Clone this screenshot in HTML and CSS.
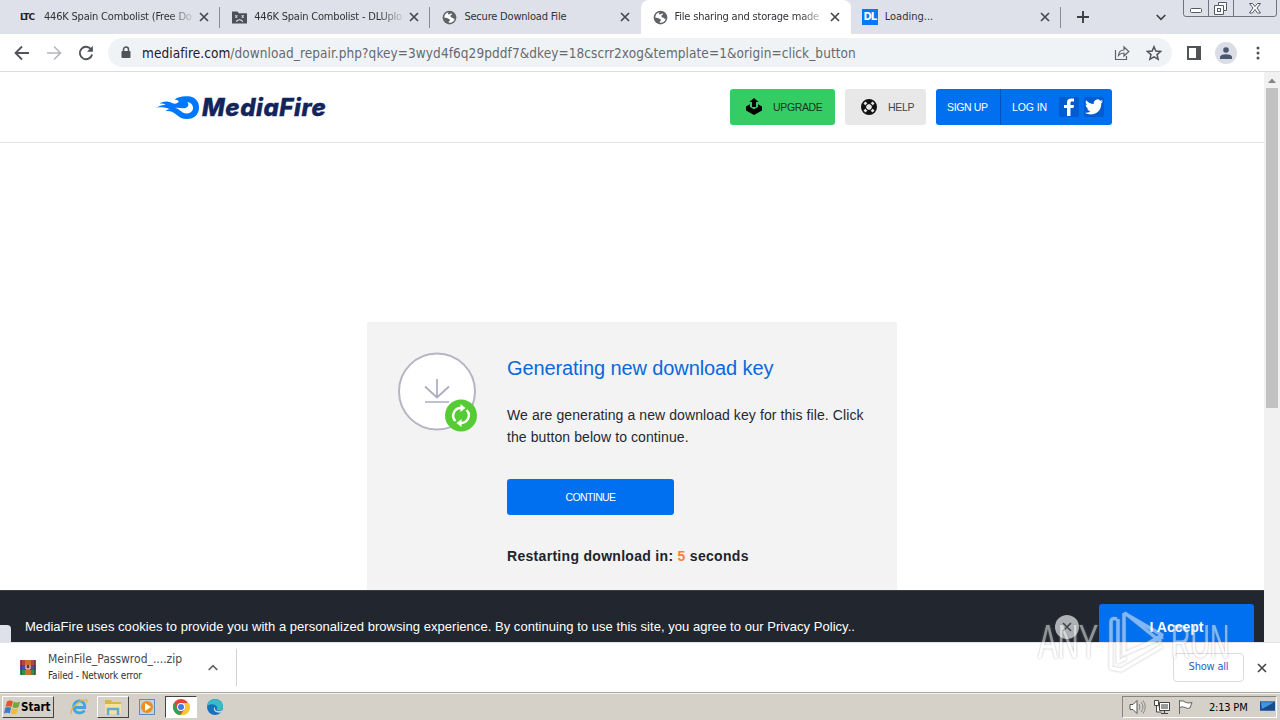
FILE: index.html
```html
<!DOCTYPE html>
<html lang="en">
<head>
    <meta charset="UTF-8">
    <title>File sharing and storage made simple</title>
    <link rel="stylesheet" href="styles.css">
</head>
<body>
    <svg class="defs" width="0" height="0">
        <symbol id="globe" viewBox="0 0 24 24"><path fill="#5f6368" d="M12 1a11 11 0 100 22 11 11 0 000-22z"/><path fill="#fff" d="M10.5 3.6C6.5 4.3 3.5 8 3.6 12c1 .5 2.600.8 4 .8 2 0 2 1.500 3.400 1.700l1.500.8c.5 1.500-.2 2.700-1.700 3v2c4.500.8 8.500-2.200 9.600-6.500-1.400.7-2.300 0-2.900-1.200-1-.8-2.500-.3-3.500-1.500-1.300-1.600-.3-3 1.500-3.500 1-1 .4-2-1-2-1.400.2-2 1.800-3.500 1.500-1.400-.4-2-1.500-.5-3.500z"/></symbol>
        <symbol id="close" viewBox="0 0 10 10"><path d="M1 1l8 8M9 1L1 9" stroke="#45484c" stroke-width="1.700" fill="none"/></symbol>
    </svg>

    <header class="tabs">
        <div class="tab">
            <span class="ltc">LTC</span>
            <span class="tab-title fade">446K Spain Combolist (Free Do</span>
            <svg class="x"><use href="#close"/></svg>
        </div>
        <div class="tab">
            <svg class="fav" viewBox="0 0 14 14"><path fill="#4d5156" d="M0 1.500h5l1.500 1.500H14v9.500H0z"/><path stroke="#dee1e9" fill="none" d="M3 5l2 2M5 5L3 7M9 5l2 2M11 5L9 7M4 11c1-2.500 5-2.500 6 0"/></svg>
            <span class="tab-title fade">446K Spain Combolist - DLUplo</span>
            <svg class="x"><use href="#close"/></svg>
        </div>
        <div class="tab no-sep">
            <svg class="fav"><use href="#globe"/></svg>
            <span class="tab-title">Secure Download File</span>
            <svg class="x"><use href="#close"/></svg>
        </div>
        <div class="tab active no-sep">
            <svg class="fav"><use href="#globe"/></svg>
            <span class="tab-title fade">File sharing and storage made</span>
            <svg class="x"><use href="#close"/></svg>
        </div>
        <div class="tab">
            <span class="dl">DL</span>
            <span class="tab-title loading">Loading...</span>
            <svg class="x"><use href="#close"/></svg>
        </div>
        <svg class="plus" viewBox="0 0 12 12"><path d="M6 0v12M0 6h12" stroke="#3c4043" stroke-width="1.900"/></svg>
        <svg class="chev" viewBox="0 0 10 7"><path d="M.7 1L5 5.300 9.300 1" stroke="#3c4043" stroke-width="1.700" fill="none"/></svg>
        <div class="window-buttons">
            <svg width="94" height="17" viewBox="0 0 94 17" fill="none" stroke="#6f7480">
                <path d="M.5 0v14q0 2.500 2.500 2.500h88q2.500 0 2.500-2.500V0M25.500 0v16M50.500 0v16"/>
                <g stroke="#555a63"><rect x="7.500" y="8.500" width="11" height="4" rx="1" fill="#fff"/>
                <path fill="#fff" d="M35.500 2.500h8v8h-3v4h-9v-9h4z"/><rect x="34.500" y="8.500" width="3" height="3"/><path d="M35.500 5.500h5v5"/>
                <path fill="#fff" d="M66.500 3.500h3l2.500 3 2.500-3h3l-3.500 4.500 3.500 5h-3L72 9.500 69.500 13h-3l3.500-5z"/></g>
            </svg>
        </div>
    </header>

    <nav class="toolbar">
        <svg class="back" viewBox="0 0 16 16"><path d="M15 8H2M8 1.500L1.500 8 8 14.500" stroke="#505357" stroke-width="1.800" fill="none"/></svg>
        <svg class="forward" viewBox="0 0 16 16"><path d="M1 8h13M8 1.500L14.500 8 8 14.500" stroke="#b5b7ba" stroke-width="1.600" fill="none"/></svg>
        <svg class="reload" viewBox="0 0 16 16"><path d="M13.200 4.500A6.200 6.200 0 1014.100 9.500" stroke="#505357" stroke-width="1.900" fill="none"/><path d="M14.900.8v6H9z" fill="#505357"/></svg>
        <div class="address">
            <svg class="lock" viewBox="0 0 10 13"><path d="M2.500 6V3.500a2.500 2.500 0 015 0V6" stroke="#505357" stroke-width="1.500" fill="none"/><rect x=".5" y="5" width="9" height="7" rx="1" fill="#505357"/></svg>
            <span class="url"><b>mediafire.com</b>/download_repair.php?qkey=3wyd4f6q29pddf7&amp;dkey=18cscrr2xog&amp;template=1&amp;origin=click_button</span>
            <svg class="share" viewBox="0 0 16 16"><path d="M1.500 5v9.500h11V11M4.500 10.500c.3-3.700 2.200-5.500 5.500-5.500V2l4.800 4.500L10 11V8c-2.500 0-4 .6-5.500 2.500z" stroke="#5f6368" stroke-width="1.200" fill="none"/></svg>
            <svg class="star" viewBox="0 0 24 24"><path d="M12 2.500l2.800 6.600 7.200.6-5.500 4.700 1.700 7L12 17.700l-6.200 3.700 1.700-7L2 9.700l7.200-.6z" stroke="#505357" stroke-width="2.200" fill="none"/></svg>
        </div>
        <svg class="panel" viewBox="0 0 14 14"><path d="M0 0h14v14H0zM2 2v10h7V2z" fill="#505357" fill-rule="evenodd"/></svg>
        <span class="avatar"><svg viewBox="0 0 12 12"><circle cx="6" cy="3" r="2.800"/><path d="M0 12V9.500Q1.500 7.300 6 7.300t6 2.200V12z"/></svg></span>
        <svg class="dots" viewBox="0 0 4 14" fill="#505357"><circle cx="2" cy="2" r="1.500"/><circle cx="2" cy="7" r="1.500"/><circle cx="2" cy="12" r="1.500"/></svg>
    </nav>

    <div class="viewport">
        <div class="page">
            <div class="site-header">
                <div class="logo">
                    <svg viewBox="0 0 45 25"><path fill="#0077ff" fill-rule="evenodd" d="M0 12.500c4-.5 6-2.800 10.500-2.500-1.500-1.400-3-1.700-6-1.500C8 6 13 5.800 17 8c3 1.400 5 .5 6.500-1 .8-1.500-1.500-2.500-4-2.200C22 2 27 .8 33 1.200 40 1.700 44 6 44 12.500 44 19.500 39 24 32 24c-5 0-8-2-11.500-5-3-2.500-5.500-3.500-10-3 1.200-1.300 2.500-1.800 4.500-1.800C10 11.700 5 12 0 12.500zM20 13c4 0 6.500 5.500 11.500 5.500 4 0 6.500-2.500 6.500-5.500s-2-5.500-6-6c2 1.500 2 4-.5 5.500-3.500 2-7-.5-11.500.5z"/></svg>
                    <span>MediaFire</span>
                </div>
                <div class="actions">
                    <div class="btn upgrade">
                        <svg viewBox="0 0 18 18"><path d="M1 8.500l4-2.200V9L9 11.200 13 9V6.300l4 2.200v4L9 17l-8-4.500z"/><path d="M9 0l4.500 4H11v5H7V4H4.500z"/></svg>
                        <span>UPGRADE</span>
                    </div>
                    <div class="btn help">
                        <svg viewBox="0 0 16 16"><circle cx="8" cy="8" r="5.500" fill="none" stroke="#111" stroke-width="5"/><path d="M2.500 4.500l2-2 2 2-2 2zM9.500 4.500l2-2 2 2-2 2zM2.500 11.500l2-2 2 2-2 2zM9.500 11.500l2-2 2 2-2 2z" fill="#e8e8e8"/><circle cx="8" cy="8" r="3.500" fill="none" stroke="#111"/></svg>
                        <span>HELP</span>
                    </div>
                    <div class="account">
                        <span class="signup">SIGN UP</span>
                        <span class="login">LOG IN</span>
                        <span class="social"><svg viewBox="0 0 20 20"><path d="M8 19v-8H5V8h3V5.500C8 2.500 9.700 1.500 12 1.500h3v3h-2c-1.300 0-1.500.6-1.500 1.500v2H15l-.5 3h-3v8z" fill="#fff"/></svg></span>
                        <span class="social"><svg viewBox="0 0 24 24"><path fill="#fff" d="M23 5.100c-.8.400-1.700.6-2.600.7.900-.6 1.600-1.400 2-2.500-.9.500-1.900.9-2.900 1.100a4.500 4.500 0 00-7.700 4.100C8.100 8.300 4.800 6.500 2.600 3.800c-1.200 2-.6 4.700 1.400 6-.7 0-1.400-.2-2-.5 0 2.200 1.500 4 3.600 4.500-.7.200-1.400.2-2 .1.600 1.800 2.200 3.100 4.200 3.100A9 9 0 011 18.900c7 4.500 19.800 1.600 19.800-11.500.9-.7 1.600-1.400 2.200-2.300z"/></svg></span>
                    </div>
                </div>
            </div>

            <main class="card">
                <div class="status-icon">
                    <svg viewBox="0 0 80 80"><circle cx="39" cy="39.500" r="38" fill="#fff" stroke="#b5b5c3" stroke-width="2"/><path d="M39 27v18M27 34.500l12 11 12-11M27 50h24" fill="none" stroke="#aaadc0" stroke-width="1.700"/><circle cx="63" cy="63.500" r="16" fill="#5c3"/><g fill="none" stroke="#fff" stroke-width="2.400"><path d="M57.500 69a7.600 7.600 0 016-13M68.500 58a7.600 7.600 0 01-6 13"/></g><path fill="#fff" d="M62.500 52l5 4-5 4zM63.500 67v8l-5-4z"/></svg>
                </div>
                <div class="card-body">
                    <h1>Generating new download key</h1>
                    <p>We are generating a new download key for this file. Click<br>the button below to continue.</p>
                    <button>CONTINUE</button>
                    <div class="countdown">Restarting download in: <em>5</em> seconds</div>
                </div>
            </main>

            <div class="cookies">
                <div class="link-hint"></div>
                <span class="cookie-text">MediaFire uses cookies to provide you with a personalized browsing experience. By continuing to use this site, you agree to our Privacy Policy..</span>
                <span class="dismiss"><svg viewBox="0 0 10 10"><use href="#close"/></svg></span>
                <span class="accept">I Accept</span>
            </div>
        </div>
        <div class="scrollbar"><svg viewBox="0 0 16 16"><path d="M4 11l4-4.500 4 4.500z" fill="#858585"/></svg><div class="thumb"></div></div>
    </div>

    <section class="downloads">
        <svg class="rar" viewBox="0 0 16 16"><path fill="#b3434d" d="M0 0h16v5H0z"/><path fill="#4c4bab" d="M0 5h16v5H0z"/><path fill="#3a8d4b" d="M0 10h16v5H0z"/><path fill="#cc6f32" d="M5 0h6v15H5z"/><path fill="#7c2639" d="M5 5h6v5H5z"/><path d="M6 5v4h4V5" stroke="#fff" fill="none"/><path d="M1.500 0v15M14.500 0v15" stroke="#442c47" opacity=".6"/></svg>
        <div class="file">
            <div class="file-name">MeinFile_Passwrod_....zip</div>
            <div class="file-status">Failed - Network error</div>
        </div>
        <svg class="up" viewBox="0 0 10 7"><path d="M.7 6L5 1.700 9.300 6" stroke="#5f6368" stroke-width="1.700" fill="none"/></svg>
        <div class="show-all">Show all</div>
        <svg class="x"><use href="#close"/></svg>
    </section>

    <footer class="taskbar">
        <div class="start">
            <svg viewBox="0 0 16 16"><path fill="#dc5730" d="M3 2q3-2 6 0L7.500 7.500q-3-1.500-6 0z"/><path fill="#70a83b" d="M9.700 2.300q3 1.500 6.300 0l-1.500 5.500q-3 1.500-6 0z"/><path fill="#397fc7" d="M1.200 8.300q3-1.500 6 0L5.700 14q-2.700-1.500-5.700 0z"/><path fill="#efbd35" d="M8.200 8.700q3 1.500 6 0L12.700 14q-3 1.500-6 0z"/></svg>
            <span>Start</span>
        </div>
        <svg class="task ie" viewBox="0 0 18 18"><path d="M14.500 12.500A6 6 0 119 3c4 0 6 3 5.700 6.500H4" fill="none" stroke="#43a5dc" stroke-width="2.800"/><path d="M1.500 16C-1 11 10 1 16.500 2c1 .7.500 2-.5 3" fill="none" stroke="#dfb43d" stroke-width="1.300"/></svg>
        <div class="task-box"><svg viewBox="0 0 18 18"><path fill="#d9b352" d="M1 2h6l1 2h9v11H1z"/><path fill="#f4e39c" d="M1 6h16v10H1z"/><path fill="none" stroke="#64aad2" stroke-width="2.500" d="M4 17v-6h10v6"/></svg></div>
        <svg class="task" viewBox="0 0 18 18"><rect x="1.500" y="1.500" width="15" height="15" fill="#bbd5e7" stroke="#568fc0"/><circle cx="9" cy="9" r="6" fill="#ef8d20"/><path fill="#fff" d="M7 5l6 4-6 4z"/></svg>
        <div class="task-box pressed"><svg viewBox="0 0 18 18"><circle cx="9" cy="9" r="8" fill="#e84435"/><path fill="#31a354" d="M2 5l4 7 4 4.900A8 8 0 012 5z"/><path fill="#fbc72e" d="M9 5h7.900A8 8 0 018.500 17l4-6z"/><circle cx="9" cy="9" r="4" fill="#fff"/><circle cx="9" cy="9" r="3" fill="#397de8"/></svg></div>
        <svg class="task" viewBox="0 0 18 18"><circle cx="9" cy="9" r="8" fill="#1672bd"/><path fill="#38bdc5" d="M1 8c1-9 16-9 16 1 0 3-3 4-5.500 3-1.500-.7 0-1.300-.5-3C10 6 5 5 1 8z"/><path fill="#d5d0c8" d="M9 9c-1 4 3 5 8 3l1 1-1 1c-4 1.500-8 .5-9-2-.5-1.200 0-2.500 1-3z"/></svg>
        <div class="tray">
            <svg class="speaker" viewBox="0 0 17 16"><path d="M1 5.500h3l4-4v13l-4-4H1z" fill="#fff" stroke="#555"/><path d="M10 5q2 3 0 6M12 3q4 5 0 10M14 1.500q4.500 6.500 0 13" fill="none" stroke="#888"/></svg>
            <svg class="net" viewBox="0 0 16 16"><path fill="#fff" stroke="#444" d="M5.500 3.500h10v8h-10zM7 14.500h7M10.500 12v2M.5 1.500h4v5h-4zM2.500 6v7h5"/><path fill="#999" d="M7 5h7v5H7z"/></svg>
            <svg class="flag" viewBox="0 0 16 16"><path d="M1.500 1v14M2 2q3-1 6 1.500 3 1 6 0Q13 6 12 9q-3 1-5-.5Q4 7 2 8.500" fill="#fff" stroke="#666"/></svg>
            <span class="clock">2:13 PM</span>
            <svg class="desktop" viewBox="0 0 16 14"><path fill="#194b8c" d="M0 1h16v10H0z"/><path fill="#4098e5" d="M1 2h14L2 9z"/><path fill="#bdd3e6" d="M5 12h8v1H5z"/></svg>
        </div>
    </footer>

    <!-- recorder watermark, lies over the cookie bar and the download shelf -->
    <div class="watermark">
        <span class="any">ANY</span>
        <svg viewBox="0 0 60 66"><path d="M15 5L53 27 33 39M15 5v41l39-17M16 5l36 29M8 11q-6-2-6 3v46l10 2 41-24M9 11v43l8-4" fill="none" stroke="#fff" stroke-width="3.500" stroke-linejoin="round"/></svg>
        <span class="run">RUN</span>
    </div>
</body>
</html>
```

FILE: styles.css
```css
:root {
    --blue: #0070f0;
    --strip: #dee1e9;
    --ui-font: "DejaVu Sans Condensed", "DejaVu Sans", sans-serif;
}

* {
    box-sizing: border-box;
}

body {
    margin: 0;
    width: 1280px;
    height: 720px;
    overflow: hidden;
    display: flex;
    flex-direction: column;
    font-family: "Liberation Sans", sans-serif;
    background: #fff;
    position: relative;
}

svg {
    display: block;
    flex: none;
}

.defs {
    position: absolute;
}

/* tab strip */
.tabs {
    height: 34px;
    flex: none;
    display: flex;
    align-items: center;
    background: var(--strip);
    padding-left: 10px;
    font-family: var(--ui-font);
    font-stretch: condensed;
}

.tab {
    width: 210.2px;
    height: 34px;
    display: flex;
    align-items: center;
    padding: 0 10px 0 12px;
    border-right: 1px solid transparent;
    border-image: linear-gradient(transparent 8px, #868b95 8px, #868b95 27px, transparent 27px) 1;
}

.tab.no-sep {
    border-image: none;
}

.tab.active {
    background: #fff;
    border-radius: 8px 8px 0 0;
}

.fav {
    width: 15px;
    height: 15px;
    margin-right: 7px;
}

.tab-title {
    flex: 1;
    font-size: 11px;
    color: #303236;
    white-space: nowrap;
    letter-spacing: -0.2px;
    line-height: 18px;
}

.loading {
    letter-spacing: 0;
}

.fade {
    -webkit-mask-image: linear-gradient(90deg, #000 125px, transparent 152px);
    mask-image: linear-gradient(90deg, #000 125px, transparent 152px);
}

.x {
    width: 10px;
    height: 10px;
}

.tab .x {
    margin-left: 4px;
}

.ltc {
    width: 22px;
    font: bold 9px "DejaVu Sans", sans-serif;
    letter-spacing: -1px;
    margin: 0 2px 0 -2px;
    color: #222;
}

.dl {
    width: 16px;
    height: 16px;
    margin: 0 7px 0 -1px;
    background: #0878f8;
    color: #fff;
    font: bold 10px/16px "DejaVu Sans", sans-serif;
    letter-spacing: -1px;
    text-align: center;
}

.plus {
    width: 12px;
    height: 12px;
    margin-left: 16px;
}

.chev {
    width: 10px;
    height: 7px;
    margin-left: 67px;
}

.window-buttons {
    align-self: flex-start;
    margin-left: 17px;
}

/* toolbar */
.toolbar {
    height: 38px;
    flex: none;
    display: flex;
    align-items: center;
    border-bottom: 1px solid #dadce0;
    padding-left: 14px;
}

.back, .forward, .reload {
    width: 16px;
    height: 16px;
    margin-right: 16px;
}

.reload {
    margin-right: 14px;
}

.address {
    width: 1064px;
    height: 29px;
    border-radius: 15px;
    background: #f0f3f6;
    display: flex;
    align-items: center;
    padding: 0 10px 0 13px;
}

.lock {
    width: 10px;
    height: 13px;
    margin-right: 11px;
}

.url {
    flex: 1;
    font: 13.5px var(--ui-font);
    font-stretch: condensed;
    color: #666a70;
    white-space: nowrap;
    letter-spacing: 0.07px;
}

.url b {
    font-weight: normal;
    color: #202124;
}

.share, .star {
    width: 16px;
    height: 16px;
}

.share {
    margin-right: 16px;
}

.panel {
    width: 14px;
    height: 14px;
    margin-left: 15px;
}

.avatar {
    width: 22px;
    height: 22px;
    border-radius: 50%;
    background: #dadde5;
    margin-left: 14px;
    display: flex;
    align-items: center;
    justify-content: center;
}

.avatar svg {
    width: 12px;
    height: 12px;
    fill: #4b566f;
}

.dots {
    width: 4px;
    height: 14px;
    margin-left: 19px;
}

/* page */
.viewport {
    height: 570px;
    flex: none;
    display: flex;
}

.page {
    width: 1264px;
    display: flex;
    flex-direction: column;
    overflow: hidden;
}

.scrollbar {
    width: 16px;
    background: #f1f1f1;
}

.scrollbar svg {
    width: 16px;
    height: 16px;
}

.thumb {
    width: 12px;
    height: 320px;
    margin-left: 2px;
    background: #c1c1c1;
}

.site-header {
    height: 71px;
    flex: none;
    border-bottom: 1px solid #e5e5e5;
    display: flex;
    justify-content: space-between;
    align-items: center;
    padding: 0 152px 0 155px;
}

.logo {
    display: flex;
    align-items: center;
}

.logo svg {
    width: 45px;
    height: 25px;
}

.logo span {
    font: italic 800 24px Inter, sans-serif;
    letter-spacing: 0.6px;
    color: #12245b;
    margin-left: 2px;
    -webkit-text-stroke: 0.4px #12245b;
}

.actions {
    display: flex;
    gap: 10px;
    font-size: 10.5px;
    letter-spacing: -0.35px;
}

.btn {
    height: 36px;
    border-radius: 3px;
    display: flex;
    align-items: center;
}

.upgrade {
    width: 105px;
    padding-left: 15px;
    gap: 10px;
    background: #35cd63;
    color: #15351f;
}

.upgrade svg {
    width: 18px;
    height: 18px;
}

.help {
    width: 81px;
    padding-left: 16px;
    gap: 11px;
    background: #e8e8e8;
    color: #40454d;
}

.help svg {
    width: 16px;
    height: 16px;
}

.account {
    width: 176px;
    height: 36px;
    border-radius: 3px;
    background: var(--blue);
    color: #fff;
    display: flex;
    align-items: center;
}

.signup {
    width: 65px;
    line-height: 36px;
    padding-left: 11px;
    border-right: 1px solid #0054b8;
}

.login {
    width: 58px;
    padding-left: 11px;
    letter-spacing: -0.1px;
}

.social {
    width: 20px;
    height: 20px;
    margin-right: 5px;
    border-radius: 2px;
    background: #005bd0;
}

.social svg {
    width: 20px;
    height: 20px;
}

.card {
    width: 530px;
    height: 268px;
    flex: none;
    margin: 179px 0 0 367px;
    background: #f3f3f3;
    display: flex;
    padding: 30px 0 0 31px;
}

.status-icon {
    width: 109px;
}

.status-icon svg {
    width: 80px;
    height: 80px;
}

.card h1 {
    margin: 4px 0 24px;
    font-size: 20px;
    font-weight: normal;
    line-height: 24px;
    color: #0969dc;
    white-space: nowrap;
    letter-spacing: -0.1px;
}

.card p {
    margin: 0;
    font-size: 14px;
    line-height: 22px;
    color: #252831;
    white-space: nowrap;
    letter-spacing: 0.09px;
}

.card button {
    width: 167px;
    height: 36px;
    display: block;
    margin: 31px 0 31px;
    border: 0;
    border-radius: 3px;
    background: var(--blue);
    color: #fff;
    font: 10.5px "Liberation Sans", sans-serif;
    letter-spacing: -0.6px;
}

.countdown {
    font-size: 14px;
    line-height: 20px;
    font-weight: bold;
    color: #20242c;
    letter-spacing: 0.3px;
}

.countdown em {
    font-style: normal;
    color: #f58239;
}

.cookies {
    height: 52px;
    flex: none;
    background: #22272f;
    border-top: 1px solid #3a3d40;
    display: flex;
    align-items: flex-start;
    color: #fff;
}

.link-hint {
    width: 11px;
    height: 18px;
    margin-top: 34px;
    border-radius: 0 4px 0 0;
    background: #dee1e9;
}

.cookie-text {
    width: 1030px;
    margin: 26px 0 0 14px;
    font-size: 13px;
    line-height: 20px;
    white-space: nowrap;
    letter-spacing: 0.04px;
}

.dismiss {
    width: 24px;
    height: 24px;
    margin-top: 24px;
    border-radius: 50%;
    background: #aeb1b5;
    display: flex;
    align-items: center;
    justify-content: center;
}

.dismiss svg {
    width: 10px;
    height: 10px;
}

.accept {
    width: 155px;
    height: 45px;
    margin: 13px 0 0 20px;
    border-radius: 3px 3px 0 0;
    background: var(--blue);
    font-size: 14px;
    font-weight: bold;
    line-height: 46px;
    text-align: center;
}

/* download shelf */
.downloads {
    height: 51px;
    flex: none;
    display: flex;
    align-items: center;
    border-top: 1px solid #e0e2e4;
    border-bottom: 1px solid #aaa79f;
    padding-left: 20px;
    font-family: var(--ui-font);
    font-stretch: condensed;
}

.rar {
    width: 16px;
    height: 16px;
}

.file {
    width: 148px;
    margin-left: 12px;
    white-space: nowrap;
}

.file-name {
    font-size: 12px;
    line-height: 17px;
    color: #46494d;
}

.file-status {
    font-size: 10px;
    line-height: 16px;
    color: #333;
    letter-spacing: -0.15px;
}

.up {
    box-sizing: content-box;
    width: 10px;
    height: 7px;
    padding: 15px 18px 15px 12px;
    border-right: 1px solid #d0d2d5;
}

.show-all {
    width: 71px;
    height: 29px;
    margin: 0 13px 0 auto;
    border: 1px solid #d9dce0;
    border-radius: 4px;
    color: #2864c4;
    font-size: 11px;
    line-height: 26px;
    text-align: center;
    letter-spacing: -0.2px;
}

.downloads .x {
    margin-right: 13px;
}

/* taskbar */
.taskbar {
    height: 27px;
    flex: none;
    display: flex;
    align-items: center;
    background: #d5d0c8;
    border-top: 1px solid #f5f3ee;
    padding-left: 2px;
    font-family: var(--ui-font);
    font-stretch: condensed;
}

.start {
    width: 52px;
    height: 22px;
    display: flex;
    align-items: center;
    border: 1px solid;
    border-color: #fff #44433f #44433f #fff;
    font-size: 11.5px;
    font-weight: bold;
}

.start svg {
    width: 16px;
    height: 17px;
    margin: 0 1px;
}

.task {
    width: 18px;
    height: 18px;
    margin: 0 9px;
}

.task.ie {
    margin: 0 9px 0 16px;
}

.task-box {
    width: 32px;
    height: 22px;
    border: 1px solid;
    border-color: #fff #44433f #44433f #fff;
    display: flex;
    align-items: center;
    justify-content: center;
}

.task-box svg {
    width: 18px;
    height: 18px;
}

.pressed {
    background: #fff;
    border-color: #44433f #fff #fff #44433f;
}

.tray {
    width: 155px;
    height: 22px;
    margin: 0 3px 0 auto;
    display: flex;
    align-items: center;
    border: 1px solid;
    border-color: #88857e #fff #fff #88857e;
    font-size: 11px;
}

.speaker {
    width: 17px;
    height: 16px;
    margin-left: 6px;
}

.net {
    width: 16px;
    height: 16px;
    margin-left: 8px;
}

.flag {
    width: 16px;
    height: 16px;
    margin-left: 8px;
}

.clock {
    width: 42px;
    margin-left: 15px;
    white-space: nowrap;
    letter-spacing: -0.2px;
}

.desktop {
    width: 15px;
    height: 14px;
    margin-left: 9px;
}

.watermark {
    position: absolute;
    left: 1038px;
    top: 608px;
    width: 198px;
    height: 66px;
    display: flex;
    align-items: center;
    opacity: 0.5;
    color: #fff;
    font: 49px/66px "Liberation Sans", sans-serif;
    filter: drop-shadow(0 0 1px #777);
}

.watermark span {
    width: 66px;
    flex: none;
    transform: scaleX(0.6);
    transform-origin: left;
}

.watermark .run {
    transform: scaleX(0.55);
}

.watermark svg {
    width: 60px;
    height: 66px;
    margin: 0 2px 0 5px;
}
```
